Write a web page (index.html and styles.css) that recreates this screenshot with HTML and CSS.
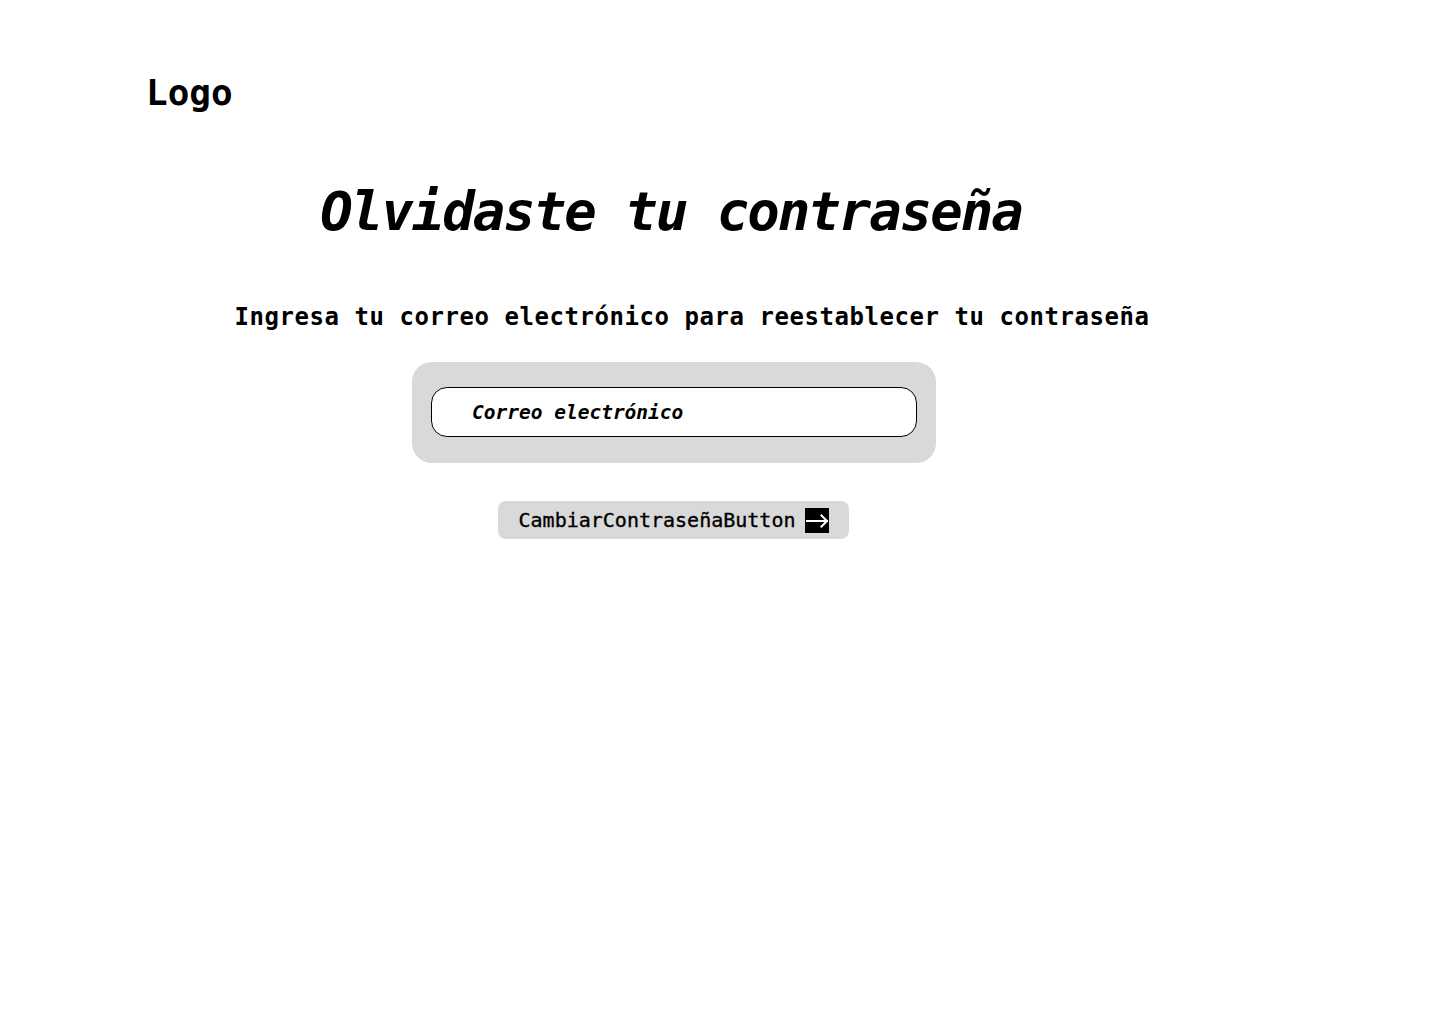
FILE: index.html
```html
<!DOCTYPE html>
<html lang="es">
<head>
<meta charset="utf-8">
<title>Olvidaste tu contraseña</title>
<link rel="stylesheet" href="styles.css">
</head>
<body>
<header class="header">
  <div class="logo">Logo</div>
</header>
<main class="main">
  <h1 class="title">Olvidaste tu contraseña</h1>
  <p class="subtitle">Ingresa tu correo electrónico para reestablecer tu contraseña</p>
  <form class="form-card">
    <input class="email-input" type="email" placeholder="Correo electrónico">
  </form>
  <button class="submit-btn" type="button">
    <span class="submit-label">CambiarContraseñaButton</span>
    <svg class="arrow-icon" width="24" height="25" viewBox="0 0 24 25" aria-hidden="true">
      <rect x="0" y="0" width="24" height="25" fill="#000"/>
      <path d="M2 13H22M16.5 7.5L22 13L16.5 18.5" fill="none" stroke="#fff" stroke-width="2" stroke-linecap="square"/>
    </svg>
  </button>
</main>
</body>
</html>
```

FILE: styles.css
```css
* {
  box-sizing: border-box;
}

html, body {
  margin: 0;
  padding: 0;
  background: #ffffff;
  color: #000000;
  font-family: "DejaVu Sans Mono", "Liberation Mono", monospace;
}

body {
  width: 1440px;
  min-height: 1024px;
}

.header {
  padding: 71px 0 0 146px;
}

.logo {
  font-size: 36px;
  line-height: 43px;
  font-weight: bold;
}

.main {
  margin-left: 147px;
  width: 1054px;
  display: flex;
  flex-direction: column;
  align-items: center;
  padding-top: 66px;
}

.title {
  margin: 0 6px 0 0;
  font-size: 54px;
  line-height: 64px;
  font-weight: bold;
  font-style: italic;
  letter-spacing: -2px;
  white-space: nowrap;
}

.subtitle {
  margin: 58px 0 0 36px;
  font-size: 24px;
  line-height: 30px;
  font-weight: bold;
  letter-spacing: 0.55px;
  white-space: nowrap;
}

.form-card {
  margin: 30px 0 0 0;
  width: 524px;
  padding: 25px 19px 26px;
  background: #d9d9d9;
  border-radius: 20px;
}

.email-input {
  display: block;
  width: 100%;
  height: 50px;
  margin: 0;
  padding: 0 0 0 40px;
  border: 1px solid #000000;
  border-radius: 16px;
  background: #ffffff;
  font-family: "DejaVu Sans Mono", "Liberation Mono", monospace;
  font-size: 19.5px;
  font-weight: bold;
  font-style: italic;
  color: #000000;
  outline: none;
}

.email-input::placeholder {
  color: #000000;
  opacity: 1;
}

.submit-btn {
  margin: 38px 1px 0 0;
  height: 38px;
  display: flex;
  align-items: center;
  gap: 10px;
  padding: 0 20px 0 21px;
  border: none;
  border-radius: 8px;
  background: #d9d9d9;
  color: #000000;
  font-family: "DejaVu Sans Mono", "Liberation Mono", monospace;
  font-size: 20px;
  line-height: 24px;
  cursor: pointer;
}

.submit-label {
  white-space: nowrap;
  -webkit-text-stroke: 0.35px #000000;
}

.arrow-icon {
  display: block;
  flex: none;
}
```
